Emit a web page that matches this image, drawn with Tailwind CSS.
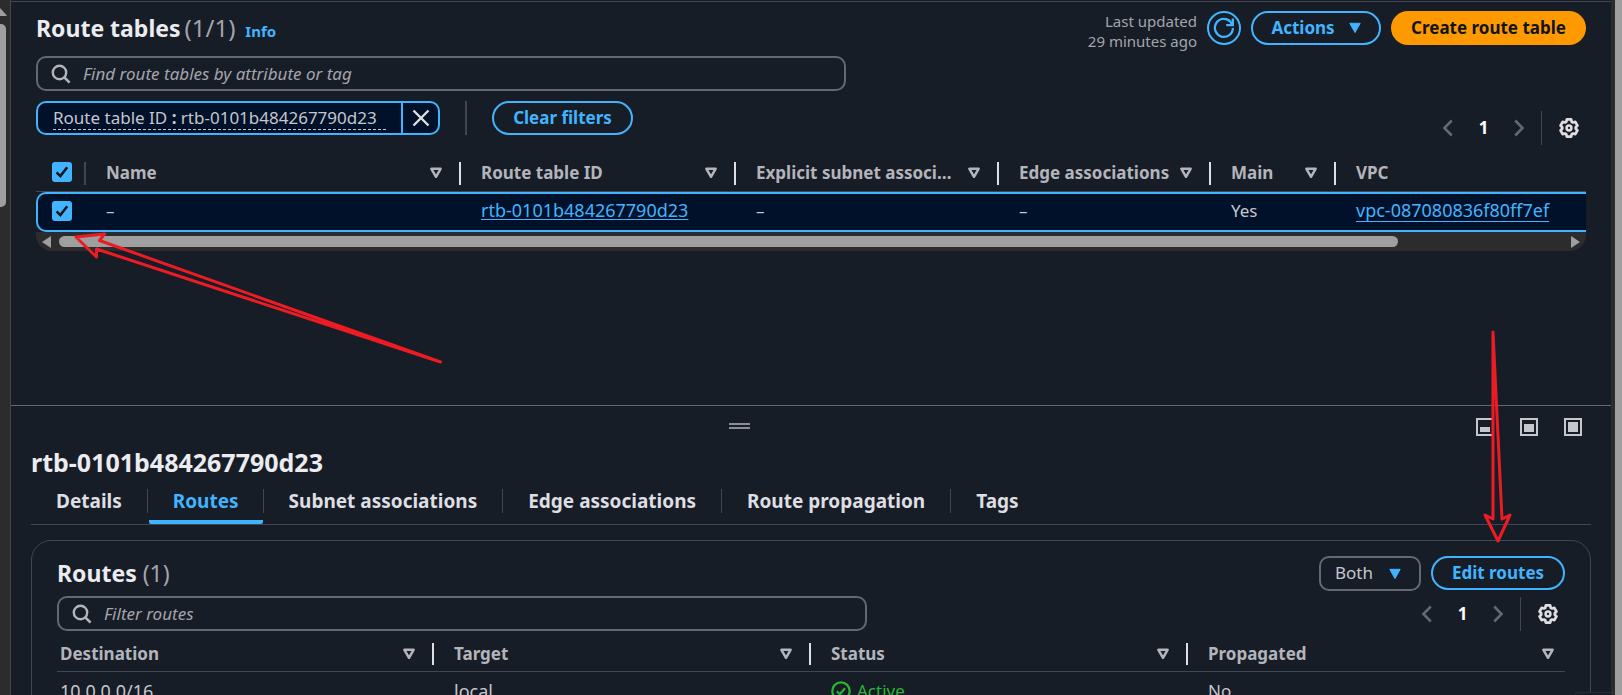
<!DOCTYPE html>
<html lang="en">
<head>
<meta charset="utf-8">
<title>Route tables</title>
<script src="https://cdn.jsdelivr.net/npm/@tailwindcss/browser@4"></script>
</head>
<body class="relative flex h-screen overflow-hidden bg-[#161d26] font-['Noto_Sans',sans-serif] text-[17px] leading-6 text-[#c6c6cd]">

<svg class="hidden" aria-hidden="true">
  <symbol id="search" viewBox="0 0 20 20"><circle cx="8.5" cy="8.5" r="6.7" fill="none" stroke="currentColor" stroke-width="2.4"/><path d="M13.3 13.3 18.6 18.6" stroke="currentColor" stroke-width="2.6"/></symbol>
  <symbol id="sort" viewBox="0 0 12 12"><path d="M1.4 1.8h9.2L6 9.8z" fill="none" stroke="currentColor" stroke-width="2.5" stroke-linejoin="round"/></symbol>
  <symbol id="caret" viewBox="0 0 12 12"><path d="M.8 1.3h10.4L6 10.6z" fill="currentColor" stroke="currentColor" stroke-linejoin="round"/></symbol>
  <symbol id="check" viewBox="0 0 20 20"><path d="M4.6 10.300l3.800 3.800L15.200 5.200" fill="none" stroke="currentColor" stroke-width="2.5"/></symbol>
  <symbol id="prev" viewBox="0 0 12 18"><path d="M9.8 1.5 2.4 9l7.4 7.5" fill="none" stroke="currentColor" stroke-width="2.5"/></symbol>
  <symbol id="next" viewBox="0 0 12 18"><path d="M2.2 1.5 9.6 9l-7.4 7.5" fill="none" stroke="currentColor" stroke-width="2.5"/></symbol>
  <symbol id="gear" viewBox="-10 -10 20 20"><path d="M-1.94-7.76L1.94-7.76 2.52-5.66 3.64-5.02 5.75-5.56 7.69-2.21 6.17-.65 6.17.65 7.69 2.21 5.75 5.56 3.64 5.02 2.52 5.66 1.94 7.76-1.94 7.76-2.52 5.66-3.64 5.02-5.75 5.56-7.69 2.21-6.17.65-6.17-.65-7.69-2.21-5.75-5.56-3.64-5.02-2.52-5.66z" fill="none" stroke="currentColor" stroke-width="2.5" stroke-linejoin="round"/><circle r="2.2" fill="none" stroke="currentColor" stroke-width="2.3"/></symbol>
</svg>

<!-- navigation scrollbar -->
<div class="flex w-[10px] shrink-0 flex-col bg-[#2c2c2c] pt-2">
  <svg class="h-2 w-[7px]" viewBox="0 0 7 8"><path d="M0 0 6.5 7V8H0z" fill="#9f9f9f"/></svg>
  <div class="mt-2 h-[183px] w-[6px] rounded-r-[5px] bg-[#9f9f9f]"></div>
</div>

<div class="flex min-w-0 flex-1 flex-col border-l border-[#424650]">
  <main class="mt-px min-h-0 flex-1 border-t border-[#424650] px-[25px] pt-[9px]">
    <header class="flex h-10 items-start gap-[10px]">
      <h1 class="flex flex-1 items-baseline text-[23px] leading-[34px] font-bold text-[#ebebf0]">Route tables<span class="ml-1 text-[24px] font-normal text-[#a4a4ad]">(1/1)</span><a href="#" class="ml-[10px] text-[15px] font-bold text-[#42b4ff]">Info</a></h1>
      <p class="text-right text-[15px] leading-5 text-[#a4a4ad]">Last updated<br>29 minutes ago</p>
      <button aria-label="Refresh" class="flex size-[34px] items-center justify-center rounded-full border-2 border-[#42b4ff] text-[#42b4ff]">
        <svg class="size-[22px] shrink-0" viewBox="0 0 22 22" fill="none" stroke="currentColor" stroke-width="2.3"><path d="M19.9 11A9 9 0 1 1 17.5 4.8L19 7.4"/><path d="M13.2 8.2h6.6V1.6"/></svg>
      </button>
      <button class="flex h-[34px] w-[130px] items-center justify-center gap-[14px] rounded-full border-2 border-[#42b4ff] font-bold text-[#42b4ff]">Actions<svg class="size-3"><use href="#caret"/></svg></button>
      <button class="h-[34px] w-[195px] rounded-full bg-[#ff9900] font-bold text-[#0f141a]">Create route table</button>
    </header>

    <div class="mt-[5px] flex items-end justify-between">
      <div class="flex-1 pb-[10px]">
        <label class="flex h-[35px] max-w-[810px] items-center gap-3 rounded-[10px] border-2 border-[#656871] px-[13px]">
          <svg class="size-5 shrink-0 text-[#b4b4bb]"><use href="#search"/></svg>
          <input type="text" aria-label="Find route tables" placeholder="Find route tables by attribute or tag" class="w-full bg-transparent outline-none placeholder:text-[#a4a4ad] placeholder:italic">
        </label>
        <div class="mt-[10px] flex h-[34px] items-center gap-[25px]">
          <div class="flex h-full items-center rounded-[10px] border-2 border-[#42b4ff] bg-[#001129]">
            <button class="mx-[15px] min-w-[333px] border-b border-dashed border-[#c6c6cd] text-left leading-[22px]">Route table ID <b>:</b> rtb-0101b484267790d23</button>
            <button aria-label="Remove filter" class="flex h-full w-[37px] items-center justify-center border-l-2 border-[#42b4ff]"><svg class="size-[18px]" viewBox="0 0 18 18"><path d="M1.5 1.5l15 15M16.5 1.5l-15 15" stroke="#dedee3" stroke-width="2.4"/></svg></button>
          </div>
          <span class="h-full w-[2px] bg-[#424650]"></span>
          <button class="h-full w-[141px] rounded-full border-2 border-[#42b4ff] font-bold text-[#42b4ff]">Clear filters</button>
        </div>
      </div>
      <nav aria-label="Pagination" class="flex h-[34px] items-center pr-[6px] text-[#656871]">
        <button aria-label="Previous page" class="flex"><svg class="h-[18px] w-3"><use href="#prev"/></svg></button>
        <button class="w-[59px] font-bold text-white">1</button>
        <button aria-label="Next page" class="flex"><svg class="h-[18px] w-3"><use href="#next"/></svg></button>
        <span class="mx-4 h-full w-px bg-[#424650]"></span>
        <button aria-label="Preferences" class="flex text-[#dedee3]"><svg class="size-[22px]"><use href="#gear"/></svg></button>
      </nav>
    </div>

    <div class="mt-[10px]">
      <table class="w-full table-fixed border-separate border-spacing-0 text-left">
        <colgroup><col class="w-[50px]"><col class="w-[375px]"><col class="w-[275px]"><col class="w-[263px]"><col class="w-[212px]"><col class="w-[125px]"><col></colgroup>
        <thead class="text-[#b4b4bb]">
          <tr class="h-[37px] *:border-b *:border-[#424650] *:p-0">
            <th><div class="flex h-[23px] items-center border-r-2 border-[#424650] pb-[2px] pl-4"><span class="grid *:col-start-1 *:row-start-1"><input type="checkbox" checked aria-label="Select all" class="size-5 appearance-none rounded-[3px] bg-[#42b4ff]"><svg class="pointer-events-none size-5 text-[#0f141a]"><use href="#check"/></svg></span></div></th>
            <th><div class="flex h-[23px] items-center gap-3 border-r-2 border-[#dedee3] pr-[17px] pl-5 font-bold"><span class="flex-1 truncate">Name</span><svg class="size-3 shrink-0"><use href="#sort"/></svg></div></th>
            <th><div class="flex h-[23px] items-center gap-3 border-r-2 border-[#dedee3] pr-[17px] pl-5 font-bold"><span class="flex-1 truncate">Route table ID</span><svg class="size-3 shrink-0"><use href="#sort"/></svg></div></th>
            <th><div class="flex h-[23px] items-center gap-3 border-r-2 border-[#dedee3] pr-[17px] pl-5 font-bold"><span class="flex-1 truncate">Explicit subnet associations</span><svg class="size-3 shrink-0"><use href="#sort"/></svg></div></th>
            <th><div class="flex h-[23px] items-center border-r-2 border-[#dedee3] pr-[17px] pl-5 font-bold"><span class="flex-1 whitespace-nowrap">Edge associations</span><svg class="size-3 shrink-0"><use href="#sort"/></svg></div></th>
            <th><div class="flex h-[23px] items-center gap-3 border-r-2 border-[#dedee3] pr-[17px] pl-5 font-bold"><span class="flex-1 truncate">Main</span><svg class="size-3 shrink-0"><use href="#sort"/></svg></div></th>
            <th><div class="pl-5 font-bold">VPC</div></th>
          </tr>
        </thead>
        <tbody>
          <tr class="h-10 *:border-y-2 *:border-[#42b4ff] *:bg-[#001129] *:p-0 *:pb-[3px]">
            <td class="rounded-l-[10px] border-l-2"><div class="flex pl-[14px]"><span class="grid *:col-start-1 *:row-start-1"><input type="checkbox" checked aria-label="Select route table" class="size-5 appearance-none rounded-[3px] bg-[#42b4ff]"><svg class="pointer-events-none size-5 text-[#0f141a]"><use href="#check"/></svg></span></div></td>
            <td><div class="pl-5">–</div></td>
            <td><div class="pl-5"><a href="#" class="text-[18px] text-[#42b4ff] underline decoration-1 underline-offset-2">rtb-0101b484267790d23</a></div></td>
            <td><div class="pl-5">–</div></td>
            <td><div class="pl-5">–</div></td>
            <td><div class="pl-5">Yes</div></td>
            <td><div class="pl-5"><a href="#" class="text-[18px] text-[#42b4ff] underline decoration-1 underline-offset-4">vpc-087080836f80ff7ef</a></div></td>
          </tr>
        </tbody>
      </table>
      <div class="flex h-[19px] items-center gap-2 rounded-b-[16px] bg-[#2c2c2c] px-[6px]">
        <svg class="h-3 w-[9px]" viewBox="0 0 9 12"><path d="M9 0v12L0 6z" fill="#9f9f9f"/></svg>
        <div class="flex-1"><div class="h-[11px] w-[89%] rounded-full bg-[#9f9f9f]"></div></div>
        <svg class="h-3 w-[9px]" viewBox="0 0 9 12"><path d="M0 0v12l9-6z" fill="#9f9f9f"/></svg>
      </div>
    </div>
  </main>

  <section class="h-[290px] shrink-0 overflow-hidden border-t border-[#656871] px-5">
    <div class="-ml-5 flex h-10 items-center gap-2 pr-[9px]">
      <div class="flex flex-1 justify-center"><button aria-label="Resize panel" class="h-[6px] w-[21px] border-y-2 border-[#8c8c94]"></button></div>
      <div class="flex gap-[26px] pt-px *:size-[18px] *:border-2 *:border-[#c6c6cd] *:p-[2px]">
        <button aria-label="Small panel" class="flex items-end"><span class="h-[5px] w-full bg-[#c6c6cd]"></span></button>
        <button aria-label="Medium panel" class="flex items-end"><span class="h-[8px] w-full bg-[#c6c6cd]"></span></button>
        <button aria-label="Large panel" class="flex items-end"><span class="h-full w-full bg-[#c6c6cd]"></span></button>
      </div>
    </div>
    <h2 class="text-[25px] leading-8 font-bold text-[#ebebf0]">rtb-0101b484267790d23</h2>
    <div role="tablist" class="flex h-[47px] items-center border-b border-[#424650] text-[19px] font-bold text-[#dedee3] *:h-full">
      <button role="tab" class="px-[25px]">Details</button><span class="flex items-center"><i class="h-6 w-px bg-[#424650]"></i></span>
      <button role="tab" aria-selected="true" class="ml-px rounded-[2px] border-b-4 border-[#42b4ff] px-6 pt-1 text-[#42b4ff]">Routes</button><span class="flex items-center"><i class="h-6 w-px bg-[#424650]"></i></span>
      <button role="tab" class="px-[25px]">Subnet associations</button><span class="flex items-center"><i class="h-6 w-px bg-[#424650]"></i></span>
      <button role="tab" class="px-[25px]">Edge associations</button><span class="flex items-center"><i class="h-6 w-px bg-[#424650]"></i></span>
      <button role="tab" class="px-[25px]">Route propagation</button><span class="flex items-center"><i class="h-6 w-px bg-[#424650]"></i></span>
      <button role="tab" class="px-[25px]">Tags</button>
    </div>

    <div class="mt-[15px] h-60 rounded-[20px] border border-[#424650] px-[25px] pt-[15px]">
      <div class="flex items-start gap-[10px]">
        <h3 class="flex-1 text-[23px] leading-[34px] font-bold text-[#ebebf0]">Routes <span class="font-normal text-[#a4a4ad]">(1)</span></h3>
        <div class="relative">
          <select aria-label="Route type" class="h-[35px] w-[102px] appearance-none rounded-[10px] border-2 border-[#656871] bg-transparent pb-[2px] pl-[14px]"><option>Both</option></select>
          <svg class="pointer-events-none absolute top-3 right-5 size-3 text-[#42b4ff]"><use href="#caret"/></svg>
        </div>
        <button class="h-[34px] w-[134px] rounded-full border-2 border-[#42b4ff] font-bold text-[#42b4ff]">Edit routes</button>
      </div>
      <div class="mt-[5px] flex items-center justify-between">
        <label class="flex h-[35px] w-full max-w-[810px] items-center gap-3 rounded-[10px] border-2 border-[#656871] px-[13px]">
          <svg class="size-5 shrink-0 text-[#b4b4bb]"><use href="#search"/></svg>
          <input type="text" aria-label="Filter routes" placeholder="Filter routes" class="w-full bg-transparent outline-none placeholder:text-[#a4a4ad] placeholder:italic">
        </label>
        <nav aria-label="Routes pagination" class="flex h-[34px] items-center pr-[6px] text-[#656871]">
          <button aria-label="Previous page" class="flex"><svg class="h-[18px] w-3"><use href="#prev"/></svg></button>
          <button class="w-[59px] font-bold text-white">1</button>
          <button aria-label="Next page" class="flex"><svg class="h-[18px] w-3"><use href="#next"/></svg></button>
          <span class="mx-4 h-full w-px bg-[#424650]"></span>
          <button aria-label="Preferences" class="flex text-[#dedee3]"><svg class="size-[22px]"><use href="#gear"/></svg></button>
        </nav>
      </div>
      <table class="mt-[6px] w-full table-fixed border-separate border-spacing-0 text-left">
        <thead class="text-[#b4b4bb]">
          <tr class="h-[35px] *:border-b *:border-[#424650] *:p-0">
            <th><div class="flex h-[22px] items-center border-r-2 border-[#dedee3] pr-[17px] pl-[3px] font-bold"><span class="flex-1">Destination</span><svg class="size-3"><use href="#sort"/></svg></div></th>
            <th><div class="flex h-[22px] items-center border-r-2 border-[#dedee3] pr-[17px] pl-5 font-bold"><span class="flex-1">Target</span><svg class="size-3"><use href="#sort"/></svg></div></th>
            <th><div class="flex h-[22px] items-center border-r-2 border-[#dedee3] pr-[17px] pl-5 font-bold"><span class="flex-1">Status</span><svg class="size-3"><use href="#sort"/></svg></div></th>
            <th><div class="flex h-[22px] items-center pr-[11px] pl-5 font-bold"><span class="flex-1">Propagated</span><svg class="size-3"><use href="#sort"/></svg></div></th>
          </tr>
        </thead>
        <tbody class="text-[18px]">
          <tr class="h-[38px] *:p-0">
            <td><div class="pl-[3px]">10.0.0.0/16</div></td>
            <td><div class="pl-5">local</div></td>
            <td><div class="flex items-center gap-[6px] pl-5 text-[17px] text-[#2bb534]"><svg class="size-5" viewBox="0 0 20 20" fill="none" stroke="currentColor" stroke-width="2.2"><circle cx="10" cy="10" r="8.7"/><path d="M5.8 10.3l3 3L14 7.2"/></svg>Active</div></td>
            <td><div class="pl-5 text-[17px]">No</div></td>
          </tr>
        </tbody>
      </table>
    </div>
  </section>
</div>

<!-- page scrollbar -->
<div class="w-[11px] shrink-0 bg-[#2c2c2c] pl-1"><div class="h-full bg-[#9f9f9f]"></div></div>

<!-- corner of a floating panel below the fold -->
<div class="absolute right-[11px] bottom-0 h-[3px] w-9 rounded-tl-[12px] border-t border-l border-[#232b37] bg-[#161d26]"></div>

<!-- annotation arrows -->
<svg class="pointer-events-none absolute top-0 left-0 h-[695px] w-[1622px]" viewBox="0 0 1622 695" fill="none" stroke="#ed1c24" stroke-width="3" stroke-linejoin="round">
  <path d="M440.5 362 99.5 240.5l5-6.5-28.5 3 20.500 20V249z"/>
  <path d="M1493 332V519l-8-4 13 26 12-26-8 4z"/>
</svg>
</body>
</html>
